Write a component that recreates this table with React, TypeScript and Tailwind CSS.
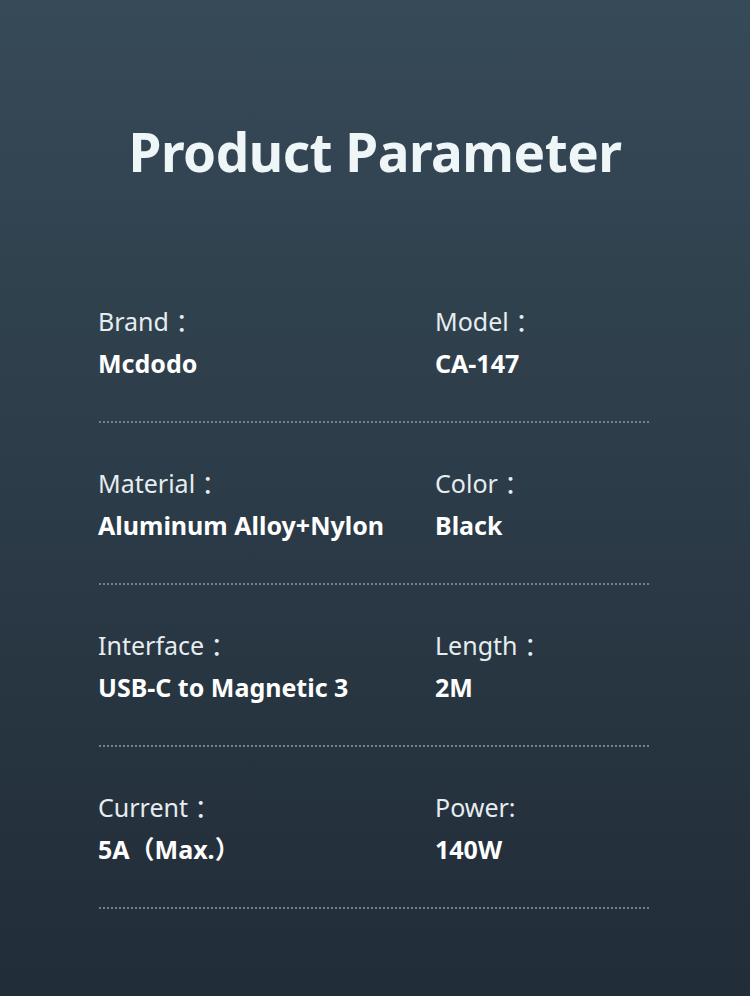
import React from 'react';

interface Param {
  label: string;
  value: string;
}

const rows: [Param, Param][] = [
  [{ label: 'Brand ：', value: 'Mcdodo' }, { label: 'Model ：', value: 'CA-147' }],
  [{ label: 'Material ：', value: 'Aluminum Alloy+Nylon' }, { label: 'Color ：', value: 'Black' }],
  [{ label: 'Interface ：', value: 'USB-C to Magnetic 3' }, { label: 'Length ：', value: '2M' }],
  [{ label: 'Current ：', value: '5A（Max.）' }, { label: 'Power:', value: '140W' }],
];

const Cell: React.FC<{ item: Param }> = ({ item }) => (
  <div>
    <p className="text-[25px] leading-[30px] text-[#e6edf0] whitespace-pre">{item.label}</p>
    <p className="mt-[12px] text-[25px] leading-[30px] font-bold text-white">{item.value}</p>
  </div>
);

export default function App() {
  return (
    <div className="w-[750px] h-[996px] overflow-hidden bg-gradient-to-b from-[#374a58] to-[#212d38] font-['Noto_Sans','Noto_Sans_CJK_SC',sans-serif]">
      <h1 className="pt-[120px] text-center text-[53px] leading-[64px] tracking-[-0.5px] font-bold text-[#eef6f8]">
        Product Parameter
      </h1>

      <div className="mt-[122px] pl-[98px] pr-[99px]">
        {rows.map((pair, i) => (
          <div key={i} className={i === 0 ? '' : 'pt-[45px]'}>
            <div className="grid grid-cols-[337px_1fr] pb-[43px]">
              <Cell item={pair[0]} />
              <Cell item={pair[1]} />
            </div>
            <div className="h-[2px] bg-[radial-gradient(circle,#73828d_0.8px,transparent_1px)] bg-[length:4px_2px]" />
          </div>
        ))}
      </div>
    </div>
  );
}
